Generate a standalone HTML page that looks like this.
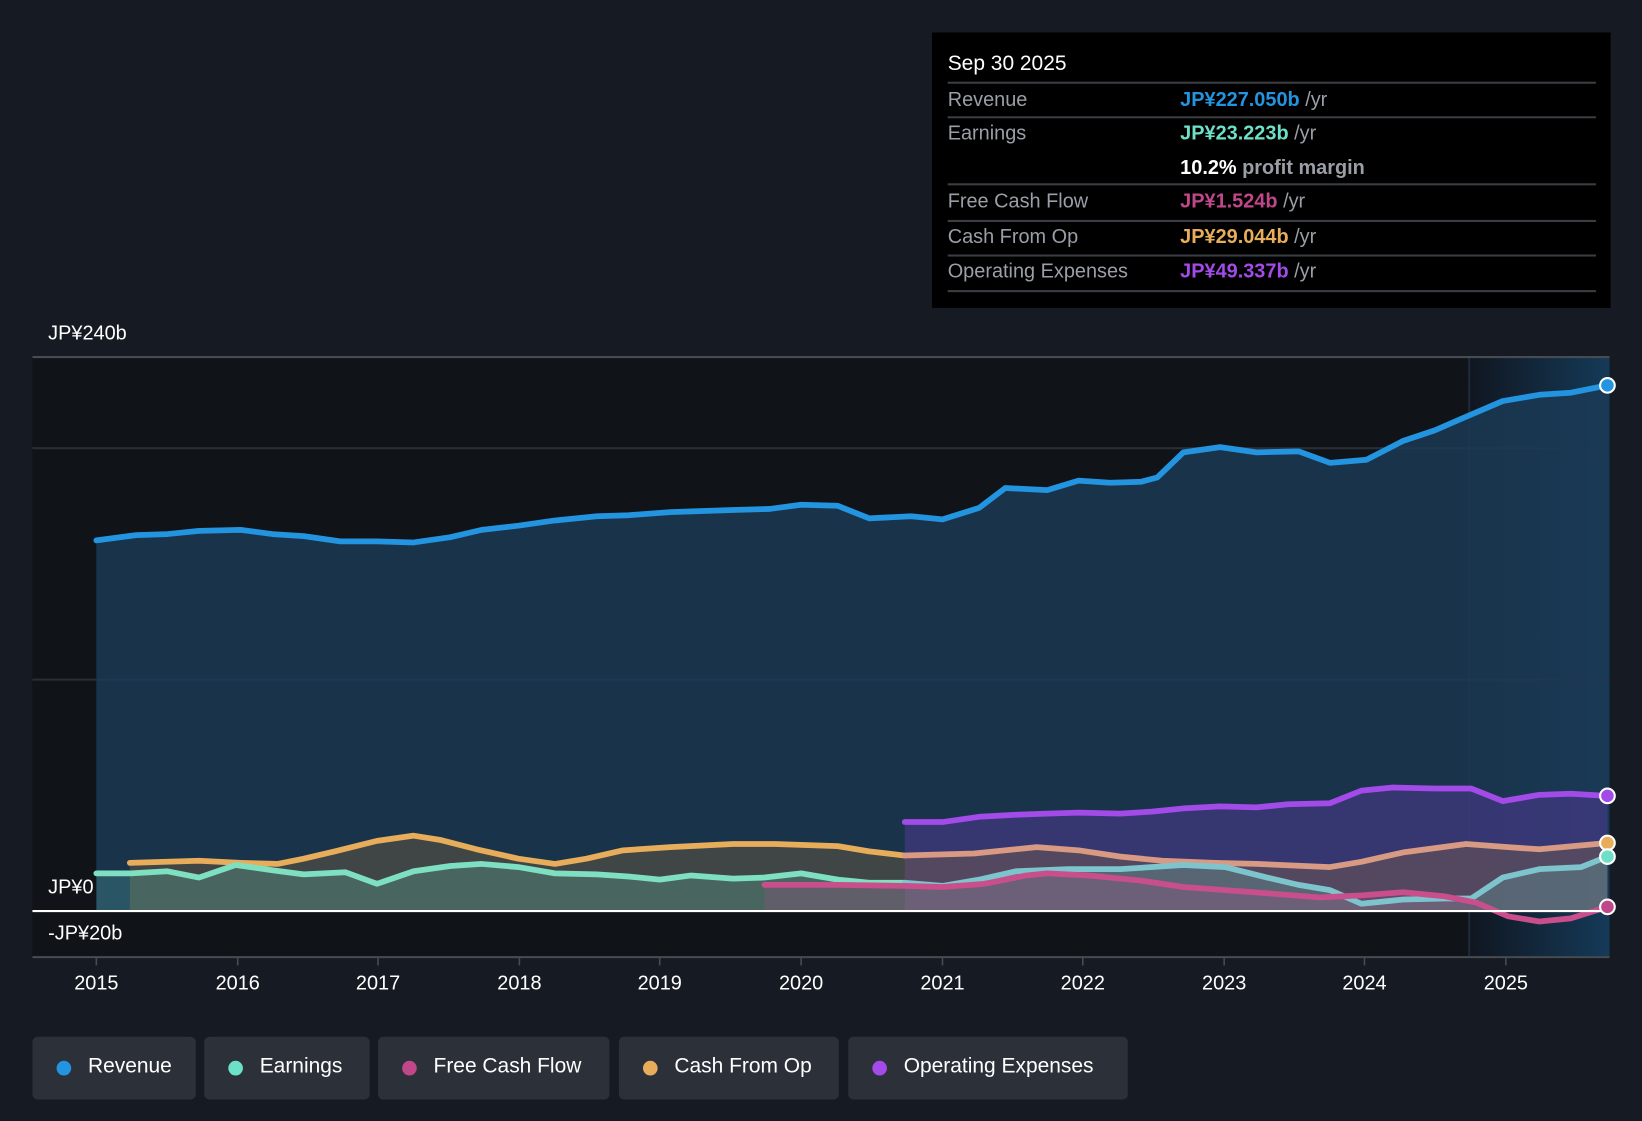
<!DOCTYPE html>
<html><head><meta charset="utf-8"><style>
html,body{margin:0;padding:0;background:#161b23;width:1642px;height:1120px;overflow:hidden}
#w{position:absolute;left:0;top:0;width:1568px;height:1070px;transform:scale(1.04719);transform-origin:0 0;font-family:"Liberation Sans",sans-serif;color:#fff}
.tt{position:absolute;left:890px;top:31px;width:648px;height:263px;background:#000}
.tt .d{position:absolute;left:15px;top:19px;font-size:20px}
.row{position:absolute;left:15px;width:619px;font-size:19px;color:#9a9ea6}
.row .v{position:absolute;left:222px;top:0;font-weight:bold}
.row .v span{color:#9a9ea6;font-weight:normal}
.ln{position:absolute;left:15px;width:619px;height:2px;background:#3a3d42}
.yl{position:absolute;left:46px;font-size:19px}
.xl{position:absolute;top:929px;font-size:19px;width:60px;margin-left:-30px;text-align:center}
.lg{position:absolute;top:990px;height:60px;background:#2b3039;border-radius:5px;font-size:20px}
.lg i{position:absolute;left:23px;top:23px;width:14px;height:14px;border-radius:50%}
.lg b{position:absolute;left:53px;top:17px;font-weight:normal}
</style></head><body><div id="w">
<svg width="1568" height="1070" style="position:absolute;left:0;top:0">
<defs>
<linearGradient id="rg" x1="0" y1="0" x2="1" y2="0"><stop offset="0" stop-color="#101620"/><stop offset="1" stop-color="#153a58"/></linearGradient>
</defs>
<rect x="31" y="341" width="1372" height="572" fill="#101318"/>
<rect x="1403" y="341" width="134" height="572" fill="url(#rg)"/>
<line x1="1403" y1="341" x2="1403" y2="913" stroke="#1e2a38" stroke-width="2"/>
<line x1="31" y1="428" x2="1537" y2="428" stroke="#2a2f37" stroke-width="2"/>
<line x1="31" y1="649" x2="1537" y2="649" stroke="#2a2f37" stroke-width="2"/>
<line x1="31" y1="341" x2="1537" y2="341" stroke="#474b52" stroke-width="2"/>
<path fill="#1b3a55" fill-opacity="0.85" d="M92,516 L130,511 160,510 190,507 230,506 260,510 290,512 325,517 360,517 395,518 430,513 460,506 495,502 530,497 570,493 600,492 640,489 700,487 735,486 765,482 800,483 830,495 870,493 900,496 935,485 960,466 1000,468 1030,459 1060,461 1090,460 1105,456 1130,432 1165,427 1200,432 1240,431 1270,442 1305,439 1340,421 1370,411 1400,398 1435,383 1470,377 1500,375 1535,368 L1535,870 L92,870Z"/>
<path fill="#5a3aa0" fill-opacity="0.45" d="M864,785 L900,785 935,780 970,778 1000,777 1030,776 1070,777 1100,775 1130,772 1165,770 1200,771 1230,768 1270,767 1300,755 1330,752 1370,753 1405,753 1435,765 1470,759 1500,758 1535,760 L1535,870 L864,870Z"/>
<path fill="#8a6a40" fill-opacity="0.35" d="M124,824 L190,822 230,824 265,825 290,820 320,813 360,803 395,798 420,802 455,811 495,820 530,825 560,820 595,812 640,809 700,806 740,806 800,808 830,813 864,817 930,815 990,809 1030,812 1070,818 1110,822 1160,824 1200,825 1270,828 1300,823 1340,814 1400,806 1440,809 1470,811 1535,805 L1535,870 L124,870Z"/>
<path fill="#6ee0c8" fill-opacity="0.2" d="M92,834 L125,834 160,832 190,838 225,826 260,831 290,835 330,833 360,844 395,832 430,827 460,825 495,828 530,834 570,835 600,837 630,840 660,836 700,839 730,838 765,834 800,840 830,843 864,843 900,846 935,840 970,832 1020,830 1070,830 1130,826 1170,828 1210,838 1240,845 1270,850 1300,863 1340,859 1380,858 1405,858 1435,838 1470,830 1510,828 1535,818 L1535,870 L92,870Z"/>
<path fill="#c0488a" fill-opacity="0.2" d="M730,845 L800,845 864,846 900,847 940,844 980,836 1000,834 1040,836 1090,841 1130,847 1170,850 1210,853 1260,857 1300,855 1340,852 1380,856 1410,862 1425,870 L730,870Z"/>
<g fill="none" stroke-width="5.5" stroke-linejoin="round" stroke-linecap="round">
<polyline stroke="#2394e0" points="92,516 130,511 160,510 190,507 230,506 260,510 290,512 325,517 360,517 395,518 430,513 460,506 495,502 530,497 570,493 600,492 640,489 700,487 735,486 765,482 800,483 830,495 870,493 900,496 935,485 960,466 1000,468 1030,459 1060,461 1090,460 1105,456 1130,432 1165,427 1200,432 1240,431 1270,442 1305,439 1340,421 1370,411 1400,398 1435,383 1470,377 1500,375 1535,368"/>
<polyline stroke="#a24be8" points="864,785 900,785 935,780 970,778 1000,777 1030,776 1070,777 1100,775 1130,772 1165,770 1200,771 1230,768 1270,767 1300,755 1330,752 1370,753 1405,753 1435,765 1470,759 1500,758 1535,760"/>
<polyline stroke="#e8ad5a" points="124,824 190,822 230,824 265,825 290,820 320,813 360,803 395,798 420,802 455,811 495,820 530,825 560,820 595,812 640,809 700,806 740,806 800,808 830,813 864,817"/>
<polyline stroke="#d99a84" points="864,817 930,815 990,809 1030,812 1070,818 1110,822 1160,824 1200,825 1270,828 1300,823 1340,814 1400,806 1440,809 1470,811 1535,805"/>
<polyline stroke="#7ee0c0" points="92,834 125,834 160,832 190,838 225,826 260,831 290,835 330,833 360,844 395,832 430,827 460,825 495,828 530,834 570,835 600,837 630,840 660,836 700,839 730,838 765,834 800,840 830,843 864,843"/>
<polyline stroke="#7ec4cc" points="864,843 900,846 935,840 970,832 1020,830 1070,830 1130,826 1170,828 1210,838 1240,845 1270,850 1300,863 1340,859 1380,858 1405,858 1435,838 1470,830 1510,828 1535,818"/>
<polyline stroke="#c84f8c" points="730,845 800,845 864,846 900,847 940,844 980,836 1000,834 1040,836 1090,841 1130,847 1170,850 1210,853 1260,857 1300,855 1340,852 1380,856 1410,862 1440,875 1470,880 1500,877 1535,866"/>
</g>
<line x1="31" y1="870" x2="1537" y2="870" stroke="#fff" stroke-width="2"/>
<line x1="31" y1="914" x2="1537" y2="914" stroke="#474b52" stroke-width="2"/>
<g stroke="#474b52" stroke-width="1.5">
<line x1="92" y1="914" x2="92" y2="922"/><line x1="227" y1="914" x2="227" y2="922"/><line x1="361" y1="914" x2="361" y2="922"/><line x1="496" y1="914" x2="496" y2="922"/><line x1="630" y1="914" x2="630" y2="922"/><line x1="765" y1="914" x2="765" y2="922"/><line x1="900" y1="914" x2="900" y2="922"/><line x1="1034" y1="914" x2="1034" y2="922"/><line x1="1169" y1="914" x2="1169" y2="922"/><line x1="1303" y1="914" x2="1303" y2="922"/><line x1="1438" y1="914" x2="1438" y2="922"/>
</g>
<g stroke="#fff" stroke-width="2">
<circle cx="1535" cy="368" r="7" fill="#2394e0"/>
<circle cx="1535" cy="760" r="7" fill="#a24be8"/>
<circle cx="1535" cy="805" r="7" fill="#e8ad5a"/>
<circle cx="1535" cy="818" r="7" fill="#6ee0c8"/>
<circle cx="1535" cy="866" r="7" fill="#c0488a"/>
</g>
</svg>
<div class="yl" style="top:308px">JP¥240b</div>
<div class="yl" style="top:837px">JP¥0</div>
<div class="yl" style="top:881px">-JP¥20b</div>
<div class="xl" style="left:92px">2015</div><div class="xl" style="left:227px">2016</div><div class="xl" style="left:361px">2017</div><div class="xl" style="left:496px">2018</div><div class="xl" style="left:630px">2019</div><div class="xl" style="left:765px">2020</div><div class="xl" style="left:900px">2021</div><div class="xl" style="left:1034px">2022</div><div class="xl" style="left:1169px">2023</div><div class="xl" style="left:1303px">2024</div><div class="xl" style="left:1438px">2025</div>
<div class="tt">
<div class="d">Sep 30 2025</div>
<div class="ln" style="top:47px"></div>
<div class="row" style="top:54px">Revenue<div class="v" style="color:#2394e0">JP¥227.050b <span>/yr</span></div></div>
<div class="ln" style="top:80px"></div>
<div class="row" style="top:86px">Earnings<div class="v" style="color:#6ee0c8">JP¥23.223b <span>/yr</span></div></div>
<div class="row" style="top:119px"><div class="v" style="color:#fff">10.2% <span style="font-weight:bold">profit margin</span></div></div>
<div class="ln" style="top:144px"></div>
<div class="row" style="top:151px">Free Cash Flow<div class="v" style="color:#c0488a">JP¥1.524b <span>/yr</span></div></div>
<div class="ln" style="top:179px"></div>
<div class="row" style="top:185px">Cash From Op<div class="v" style="color:#e8ad5a">JP¥29.044b <span>/yr</span></div></div>
<div class="ln" style="top:212px"></div>
<div class="row" style="top:218px">Operating Expenses<div class="v" style="color:#a24be8">JP¥49.337b <span>/yr</span></div></div>
<div class="ln" style="top:246px"></div>
</div>
<div class="lg" style="left:31px;width:156px"><i style="background:#2394e0"></i><b>Revenue</b></div>
<div class="lg" style="left:195px;width:158px"><i style="background:#6ee0c8"></i><b>Earnings</b></div>
<div class="lg" style="left:361px;width:221px"><i style="background:#c0488a"></i><b>Free Cash Flow</b></div>
<div class="lg" style="left:591px;width:210px"><i style="background:#e8ad5a"></i><b>Cash From Op</b></div>
<div class="lg" style="left:810px;width:267px"><i style="background:#a24be8"></i><b>Operating Expenses</b></div>
</div></body></html>
